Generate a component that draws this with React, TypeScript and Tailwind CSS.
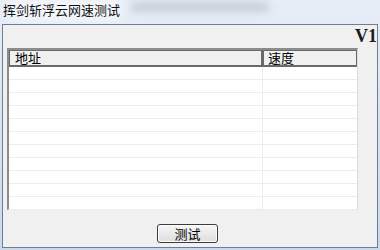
import React from "react";

const rows = Array.from({ length: 11 });

const App = () => {
  return (
    <div
      className="relative w-[380px] h-[250px] overflow-hidden bg-gradient-to-b from-[#e8eef6] to-[#c9d9ec] flex flex-col"
      style={{ fontFamily: '"Noto Sans CJK SC", "Noto Sans", sans-serif' }}
    >
      {/* blurred glass behind title */}
      <div className="absolute left-[130px] top-[2px] w-[140px] h-[10px] bg-[#7d869c] opacity-30 blur-[4px] rounded-full"></div>
      <div className="absolute left-[10px] top-[0px] w-[110px] h-[20px] bg-white opacity-60 blur-[6px]"></div>

      {/* title bar */}
      <div className="relative h-[24px] pl-[3px] pt-[1px] text-[13px] leading-[17px] text-[#111]">
        挥剑斩浮云网速测试
      </div>

      {/* client area */}
      <div className="relative mx-[2px] mb-[2px] flex-1 border border-[#6d7d92] bg-[#f0f0f0] flex flex-col">
        <div className="flex justify-end h-[23px]">
          <span
            className="font-bold text-[18px] leading-[20px] text-[#1a1a1a] pt-[1px]"
            style={{ fontFamily: '"Liberation Serif", serif' }}
          >
            V1
          </span>
        </div>

        {/* list view */}
        <div className="ml-[4px] w-[351px] h-[162px] border-t-2 border-l-2 border-t-[#8c8c8c] border-l-[#8c8c8c] border-r border-b border-r-[#dcdcdc] border-b-[#dcdcdc] bg-white flex flex-col">
          <div className="flex h-[17px] text-[13px] leading-[14px] text-black">
            <div className="w-[253px] border border-[#6a6a6a] border-b-2 bg-[#f0f0f0] pl-[5px]">地址</div>
            <div className="flex-1 border border-l-2 border-b-2 border-[#6a6a6a] bg-[#f0f0f0] pl-[4px]">速度</div>
          </div>
          <div className="flex flex-col">
            {rows.map((_, i) => (
              <div key={i} className="flex h-[13px] border-b border-[#ececec]">
                <div className="w-[254px] border-r border-[#ececec]"></div>
                <div className="flex-1"></div>
              </div>
            ))}
          </div>
        </div>

        <div className="flex mt-[14px] ml-[154px]">
          <button className="w-[61px] h-[19px] rounded-[3px] border border-[#3c3c3c] bg-gradient-to-b from-[#f6f6f6] to-[#dedede] text-[13px] leading-[14px] text-black shadow-[inset_0_0_0_1px_#fcfcfc]">
            测试
          </button>
        </div>
      </div>
    </div>
  );
};

export default App;
